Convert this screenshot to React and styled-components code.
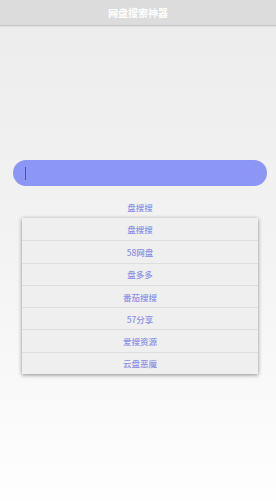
import React from "react";
import styled, { createGlobalStyle } from "styled-components";

const Global = createGlobalStyle`
  html, body {
    margin: 0;
    padding: 0;
  }
  body {
    font-family: "Noto Sans CJK SC", "Noto Sans", sans-serif;
  }
`;

const Page = styled.div`
  width: 276px;
  height: 501px;
  background: linear-gradient(to bottom, #ececec 0%, #f3f3f3 50%, #fefefe 100%);
  display: flex;
  flex-direction: column;
  overflow: hidden;
`;

const Header = styled.div`
  height: 25px;
  background: #dcdcdc;
  border-bottom: 1px solid #c9c9c9;
  box-shadow: 0 1px 1px rgba(0, 0, 0, 0.05);
  display: flex;
  align-items: center;
  justify-content: center;
  color: #fff;
  font-size: 10px;
  font-weight: bold;
`;

const Body = styled.div`
  padding: 134px 9px 0 13px;
  display: flex;
  flex-direction: column;
`;

const SearchBox = styled.div`
  height: 26px;
  border-radius: 13px;
  background: #8b96f5;
  display: flex;
  align-items: center;
  padding-left: 12px;
`;

const Caret = styled.span`
  width: 1px;
  height: 13px;
  background: #4b53a8;
`;

const Engine = styled.div`
  margin-top: 14px;
  text-align: center;
  font-size: 8.5px;
  font-weight: 500;
  color: #8c93e4;
  line-height: 14px;
`;

const Menu = styled.div`
  margin: 4px 9px 0 9px;
  background: #efefef;
  box-shadow: 0 1px 4px rgba(0, 0, 0, 0.45);
  display: flex;
  flex-direction: column;
`;

const Item = styled.div`
  height: 22.3px;
  display: flex;
  align-items: center;
  justify-content: center;
  font-size: 8.5px;
  font-weight: 500;
  color: #8a91e6;
  border-top: ${(p) => (p.$first ? "none" : "1px solid #dddddd")};
  box-sizing: border-box;
`;

const engines = ["盘搜搜", "58网盘", "盘多多", "番茄搜搜", "57分享", "爱搜资源", "云盘恶魔"];

export default function App() {
  return (
    <Page>
      <Global />
      <Header>网盘搜索神器</Header>
      <Body>
        <SearchBox>
          <Caret />
        </SearchBox>
        <Engine>盘搜搜</Engine>
        <Menu>
          {engines.map((e, i) => (
            <Item key={e} $first={i === 0}>
              {e}
            </Item>
          ))}
        </Menu>
      </Body>
    </Page>
  );
}
